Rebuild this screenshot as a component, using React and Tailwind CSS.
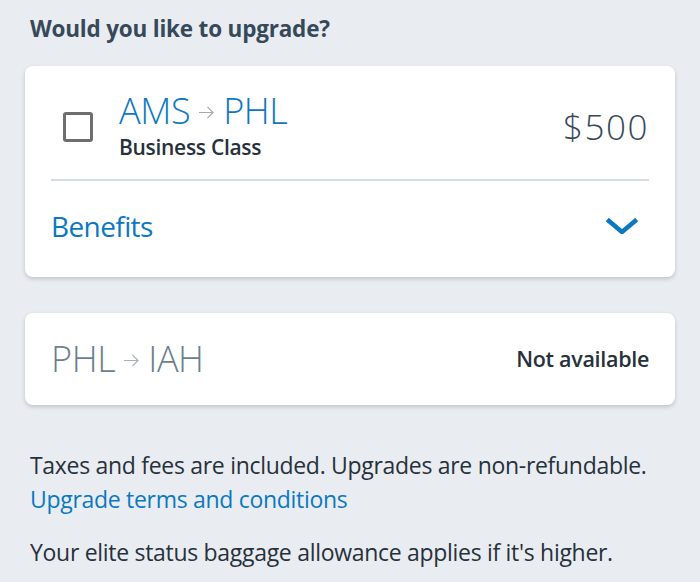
import React from "react";

const font = { fontFamily: "'Open Sans', 'Noto Sans', sans-serif" };

const Arrow = ({ className }) => (
  <svg viewBox="0 0 18 16" className={className} fill="none" stroke="currentColor" strokeWidth="1.3">
    <path d="M1 8h15M10 2l6 6-6 6" />
  </svg>
);

export default function App() {
  return (
    <div className="w-[700px] h-[582px] bg-[#e9edf1] overflow-hidden" style={font}>
      <h1 className="pl-[30px] pt-[14px] text-[22.5px] leading-[30px] font-bold text-[#36495a] tracking-[-0.2px]">
        Would you like to upgrade?
      </h1>

      {/* Upgradeable segment */}
      <div className="mx-[25px] mt-[22px] bg-white rounded-lg shadow-[0_2px_4px_rgba(0,0,0,0.18)] px-[26px]">
        <div className="flex items-start pt-[25px] pb-[19px] border-b-2 border-[#d5dce2]">
          <div className="w-[30px] h-[30px] mt-[21px] border-[3px] border-[#6e6e6e] rounded-[3px] ml-[12px] mr-[26px]" />
          <div className="flex-1">
            <div className="flex items-center text-[36px] leading-[40px] font-light text-[#0b78c2] tracking-[-0.4px]">
              <span>AMS</span>
              <Arrow className="w-[17px] h-[15px] mx-[8px] mt-[2px] text-[#a3abb2]" />
              <span>PHL</span>
            </div>
            <div className="mt-[3px] text-[21px] font-semibold text-[#27313b] leading-[26px] tracking-[-0.3px]">
              Business Class
            </div>
          </div>
          <div className="mt-[16px] text-[35px] leading-[40px] font-light text-[#36495a] tracking-[1.5px]">$500</div>
        </div>
        <div className="flex items-center justify-between h-[96px] pb-[7px]">
          <span className="text-[28px] text-[#0b78c2] tracking-[-0.6px]">Benefits</span>
          <svg viewBox="0 0 32 16" className="w-[32px] h-[16px] mr-[11px] text-[#0b78c2]" fill="none" stroke="currentColor" strokeWidth="4.5" strokeLinecap="square">
            <path d="M3 3l13 11L29 3" />
          </svg>
        </div>
      </div>

      {/* Unavailable segment */}
      <div className="mx-[25px] mt-[36px] h-[92px] bg-white rounded-lg shadow-[0_2px_4px_rgba(0,0,0,0.18)] px-[26px] flex items-center justify-between">
        <div className="flex items-center text-[36px] font-light text-[#6c7f8c] tracking-[-0.4px]">
          <span>PHL</span>
          <Arrow className="w-[17px] h-[15px] mx-[8px] mt-[2px] text-[#a8b1b8]" />
          <span>IAH</span>
        </div>
        <span className="text-[21.5px] font-semibold text-[#27313b] tracking-[-0.3px]">Not available</span>
      </div>

      <div className="pl-[30px] pt-[43px] text-[23px] text-[#27313b] tracking-[-0.3px]">
        <p className="leading-[34px]">Taxes and fees are included. Upgrades are non-refundable.</p>
        <p className="leading-[34px] text-[#0b78c2]">Upgrade terms and conditions</p>
        <p className="mt-[19px] leading-[34px]">Your elite status baggage allowance applies if it's higher.</p>
      </div>
    </div>
  );
}
